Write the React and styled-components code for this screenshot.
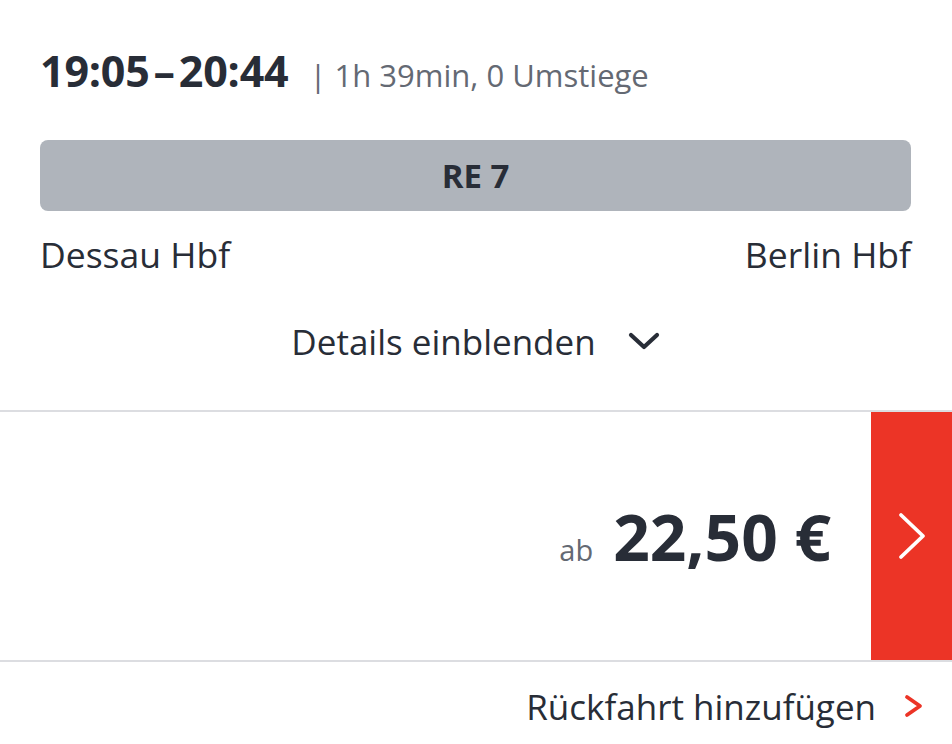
import React from "react";
import styled, { createGlobalStyle } from "styled-components";

const COLORS = {
  text: "#282d37",
  muted: "#646973",
  bar: "#afb4bb",
  line: "#dcdde1",
  red: "#ec3426",
};

const GlobalStyle = createGlobalStyle`
  body {
    margin: 0;
    background: #fff;
    font-family: "Open Sans", "Noto Sans", sans-serif;
    color: ${COLORS.text};
  }
`;

function ChevronRight({ width, height, color, strokeWidth, d }) {
  return (
    <svg
      width={width}
      height={height}
      viewBox={`0 0 ${width} ${height}`}
      fill="none"
      stroke={color}
      strokeWidth={strokeWidth}
      strokeLinecap="round"
      strokeLinejoin="round"
    >
      <path d={d} />
    </svg>
  );
}

export default function App() {
  return (
    <>
      <GlobalStyle />
      <Page>
        <Journey>
          <Header>
            <Times>19:05 – 20:44</Times>
            <Meta>| 1h 39min, 0 Umstiege</Meta>
          </Header>
          <LineBar>RE 7</LineBar>
          <Stations>
            <span>Dessau Hbf</span>
            <span>Berlin Hbf</span>
          </Stations>
          <DetailsButton>
            Details einblenden
            <ChevronRight
              width={32}
              height={18}
              color={COLORS.text}
              strokeWidth={4.2}
              d="M3 3L16 15L29 3"
            />
          </DetailsButton>
        </Journey>
        <PriceRow>
          <Price>
            <From>ab</From>
            <Amount>22,50 €</Amount>
          </Price>
          <SelectButton aria-label="Auswählen">
            <ChevronRight
              width={30}
              height={50}
              color="#fff"
              strokeWidth={3.8}
              d="M4 4L26 25L4 46"
            />
          </SelectButton>
        </PriceRow>
        <ReturnLink>
          Rückfahrt hinzufügen
          <ChevronRight
            width={20}
            height={24}
            color={COLORS.red}
            strokeWidth={3.8}
            d="M3 3L16 12L3 21"
          />
        </ReturnLink>
      </Page>
    </>
  );
}

const Page = styled.div`
  width: 952px;
  height: 744px;
  overflow: hidden;
`;

const Journey = styled.div`
  padding: 41px 41px 0 40px;
  border-bottom: 2px solid ${COLORS.line};
`;

const Header = styled.div`
  display: flex;
  align-items: baseline;
  gap: 21px;
  height: 57px;
`;

const Times = styled.span`
  font-size: 43px;
  font-weight: 700;
  letter-spacing: -0.2px;
  word-spacing: -7px;
`;

const Meta = styled.span`
  font-size: 31px;
  color: ${COLORS.muted};
`;

const LineBar = styled.div`
  margin-top: 42px;
  height: 71px;
  border-radius: 8px;
  background: ${COLORS.bar};
  display: flex;
  align-items: center;
  justify-content: center;
  font-size: 33px;
  font-weight: 700;
`;

const Stations = styled.div`
  display: flex;
  justify-content: space-between;
  margin-top: 19px;
  font-size: 35.5px;
  line-height: 48px;
`;

const DetailsButton = styled.button`
  display: flex;
  align-items: center;
  justify-content: center;
  gap: 32px;
  width: 100%;
  height: 52px;
  margin: 37px 0 43px;
  padding: 0;
  border: none;
  background: transparent;
  font-family: inherit;
  font-size: 35px;
  color: ${COLORS.text};
`;

const PriceRow = styled.div`
  display: flex;
  justify-content: flex-end;
  height: 248px;
  border-bottom: 2px solid ${COLORS.line};
`;

const Price = styled.div`
  display: flex;
  align-items: baseline;
  gap: 20px;
  align-self: center;
  padding-right: 40px;
`;

const From = styled.span`
  font-size: 29px;
  color: ${COLORS.muted};
`;

const Amount = styled.span`
  font-size: 64px;
  font-weight: 700;
`;

const SelectButton = styled.button`
  width: 81px;
  border: none;
  background: ${COLORS.red};
  display: flex;
  align-items: center;
  justify-content: center;
  padding: 0;
`;

const ReturnLink = styled.div`
  display: flex;
  justify-content: flex-end;
  align-items: center;
  gap: 28px;
  height: 88px;
  padding-right: 28px;
  font-size: 35px;
  color: ${COLORS.text};
`;
